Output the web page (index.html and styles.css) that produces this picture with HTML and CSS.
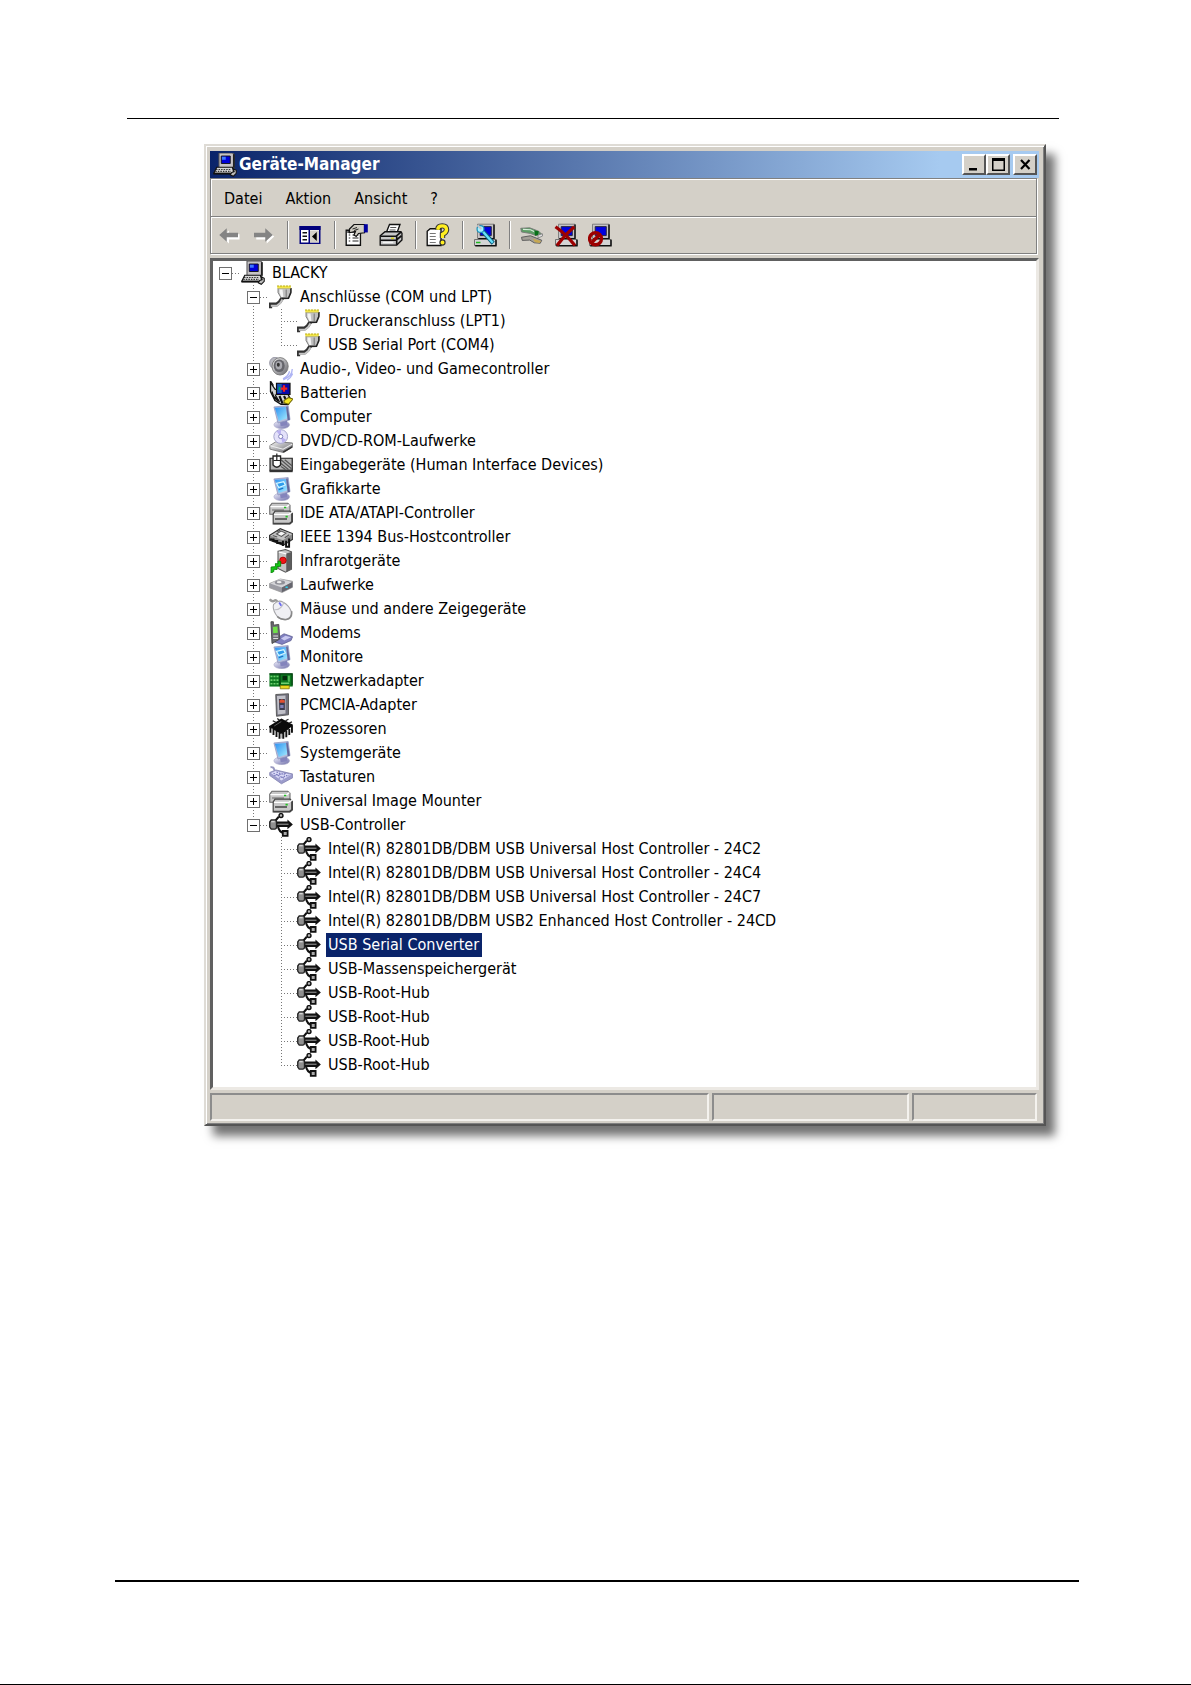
FILE: index.html
```html
<!DOCTYPE html>
<html lang="de">
<head>
    <meta charset="UTF-8">
    <meta name="viewport" content="width=device-width, initial-scale=1.0">
    <title>Geräte-Manager</title>
    <link rel="stylesheet" href="styles.css">
</head>
<body>
    <!-- Icons, 16x16 grid -->
    <svg class="sprite" aria-hidden="true">
        <defs>
            <linearGradient id="metal" x1="0" y1="0" x2="1" y2="1">
                <stop offset="0" stop-color="#f4f4f4"/>
                <stop offset="1" stop-color="#66666c"/>
            </linearGradient>
            <linearGradient id="screen" x1="0" y1="0" x2="1" y2="1">
                <stop offset="0" stop-color="#2c90f0"/>
                <stop offset="1" stop-color="#a4ecff"/>
            </linearGradient>
            <linearGradient id="lilac" x1="0" y1="0" x2="1" y2="1">
                <stop offset="0" stop-color="#f0f0fc"/>
                <stop offset="1" stop-color="#6c6ca8"/>
            </linearGradient>
        </defs>
        <symbol id="pc" viewBox="0 0 16 16">
            <path d="M4 0h9l1 1v9H4z" fill="#c6c3c6" stroke="#555" stroke-width=".7"/>
            <path d="M13.3 .8h1.2v9h-1.2z" fill="#222"/>
            <path d="M5.5 2h6v5h-6z" fill="#0000d8" stroke="#111" stroke-width=".6"/>
            <path d="M6 2.5h2.5v2H6z" fill="#3c78ff"/>
            <path d="M2.5 9.500h10.500l1 4H.5z" fill="#d8d8d8" stroke="#111" stroke-width=".8"/>
            <path d="M2 11h10M1.500 12.300h10.500" stroke="#333" stroke-width=".8" stroke-dasharray="1 .7"/>
            <path d="M.3 13.800h11.500" stroke="#111" stroke-width="1.200"/>
            <path d="M13.5 10.5l2 1v2l-2 2-2-1 1-1.5 1.6-.6z" fill="#bbb" stroke="#111" stroke-width=".7"/>
        </symbol>
        <symbol id="plug" viewBox="0 0 16 16">
            <path d="M.8 15.5v-2.500h4.200l2-1.500L9 8.500" fill="none" stroke="#333" stroke-width="2.6"/>
            <path d="M1.200 13.800h4L7.500 12 9 9.500" fill="none" stroke="#c4c4c4" stroke-width="1.3"/>
            <path d="M6 2h8.500v2.500L13 8.500H8L6 5z" fill="#c0c0c0" stroke="#777" stroke-width=".6"/>
            <path d="M7 3h2l.6 5H8.200L7 5z" fill="#f4f4f4"/>
            <path d="M14.600 2v3L13 8.800 8.500 9" fill="none" stroke="#222" stroke-width="1"/>
            <path d="M11.500 3v5" stroke="#888" stroke-width=".9"/>
            <path d="M5.500.5h9v1.8h-9z" fill="#f2e54a"/>
            <path d="M5.500.6h9.500" stroke="#a89a00" stroke-width=".7" stroke-dasharray="1 1"/>
        </symbol>
        <symbol id="audio" viewBox="0 0 16 16">
            <ellipse cx="4" cy="4" rx="3.6" ry="3.8" fill="#b8b8c0" stroke="#8a8a98" stroke-width=".5"/>
            <ellipse cx="7.4" cy="6.2" rx="5.4" ry="5.8" fill="url(#metal)" stroke="#777" stroke-width=".6"/>
            <ellipse cx="6.800" cy="5.8" rx="3.7" ry="4.2" fill="#66666c"/>
            <ellipse cx="6.6" cy="5.6" rx="2.200" ry="2.7" fill="#aaaab0"/>
            <ellipse cx="6.2" cy="5.2" rx="1" ry="1.3" fill="#333"/>
            <path d="M15.5 8q0 5-6 7.2M13.7 9.500q-.8 3.500-4.400 5M15.8 11q-1 2.8-3.8 4.500" fill="none" stroke="#aeb4f4" stroke-width=".9"/>
        </symbol>
        <symbol id="battery" viewBox="0 0 16 16">
            <path d="M1 1v6l3 6 4 2.500h5l1-4-2-4-8-2z" fill="#d5d5d5" stroke="#111" stroke-width=".9"/>
            <path d="M1 0l2 3M2 7l2 6M4 9l3 5" fill="none" stroke="#111" stroke-width=".8"/>
            <path d="M5 1.5h9v7.5H5z" fill="#0808a8" stroke="#111" stroke-width=".8"/>
            <path d="M5.5 2h3v6h-3z" fill="#155db0"/>
            <path d="M10 2.8v4.4M7.8 5h4.4" stroke="#f02020" stroke-width="1.5"/>
            <path d="M6.5 4h1v2h-1z" fill="#00b060"/>
            <path d="M3.5 10.500l3 3M7 10l2 5M10 10l1 2" stroke="#111" stroke-width="1.4"/>
            <path d="M10 13l3-2 3 1-3 3.5-3-1z" fill="#f4e620" stroke="#6e6400" stroke-width=".7"/>
        </symbol>
        <symbol id="computer" viewBox="0 0 16 16">
            <ellipse cx="8.5" cy="13.200" rx="5.200" ry="2.6" fill="url(#lilac)" stroke="#a4a4c4" stroke-width=".4"/>
            <path d="M7 9.500h5l.3 4-4.500.7z" fill="#8484bc"/>
            <path d="M3.3 1.3L12.800.4l1.200 9.400-8 2.200z" fill="#b6bcdc" stroke="#8c94bc" stroke-width=".5"/>
            <path d="M3.900 1.9l7.5-.6.8 7.500-5.700 1.900z" fill="url(#screen)"/>
            <path d="M12.400.8l1.500 9-1.500.4-1-9z" fill="#62689c"/>
        </symbol>
        <symbol id="display" viewBox="0 0 16 16">
            <use href="#computer"/>
            <path d="M5 4.300l4.800-1.200 1.100 2.200-4.400 1.700z" fill="#2e9cec" stroke="#d8f8ff" stroke-width=".8"/>
            <path d="M6.500 8.400l3-1" stroke="#1874c8" stroke-width=".8"/>
        </symbol>
        <symbol id="disc" viewBox="0 0 16 16">
            <path d="M.6 11l4-2.500 11 .8v2.700l-6 3.700-9-2.300z" fill="url(#metal)" stroke="#777" stroke-width=".6"/>
            <path d="M.8 11.2l8.600 2.300 6-3.400" fill="none" stroke="#eee" stroke-width=".7"/>
            <path d="M9.500 15.400l6-3.500" stroke="#333" stroke-width="1.100"/>
            <circle cx="7.800" cy="5" r="4.6" fill="#e4e2fa" stroke="#a0a0c8" stroke-width=".6"/>
            <path d="M7.800 5L5 1.500l3-1zM7.800 5l3.800 2.400-2.600 1.800z" fill="#b9b0f0"/>
            <circle cx="7.800" cy="5" r="1.400" fill="#fff" stroke="#7878b4" stroke-width=".6"/>
        </symbol>
        <symbol id="hid" viewBox="0 0 16 16">
            <path d="M.7 3.500h14.800v8H.7z" fill="#b4b4b4" stroke="#222" stroke-width=".8"/>
            <path d="M8 4.500l7 6M8 7l5 4M10.500 4.500l4.800 4M8 9l3 2" stroke="#555" stroke-width=".8"/>
            <path d="M.3 12h15.500" stroke="#333" stroke-width="1.600"/>
            <path d="M2.700 2h5v6q-2.500 3-5 0z" fill="#fff" stroke="#222" stroke-width=".9"/>
            <path d="M5.200.3v4.600M3 5h4.600" stroke="#222" stroke-width=".8"/>
        </symbol>
        <symbol id="drives" viewBox="0 0 16 16">
            <path d="M2 1.500h10.500l1.500 1.300v4.700l-2 1.300H.5V3.400z" fill="#c8c8c8" stroke="#666" stroke-width=".7"/>
            <path d="M1 3.700h11l1.600-1.400" fill="none" stroke="#fff" stroke-width=".8"/>
            <path d="M2 6h8" stroke="#777" stroke-width=".8"/>
            <path d="M4 6.800h10l1.600 1.500v5.500L14 15.200H2.800V8.600z" fill="#c8c8c8" stroke="#444" stroke-width=".8"/>
            <path d="M3.300 8.900h10l2-1.400" fill="none" stroke="#fff" stroke-width=".8"/>
            <path d="M4 12h8M15.300 8.500v5.300L13.800 15H3" fill="none" stroke="#444" stroke-width="1.100"/>
            <path d="M10 3.800h1.500v1H10zM11 9.800h1.500v1.200H11z" fill="#20c020"/>
        </symbol>
        <symbol id="ieee" viewBox="0 0 16 16">
            <path d="M.3 7l7.200-4.500 8.300 3.300v3.700l-6.300 4L.3 10z" fill="#888" stroke="#333" stroke-width=".8"/>
            <path d="M.8 7.200l8.500 3 6.200-4.200-8-3z" fill="#c4c4c4"/>
            <path d="M5 6l3-2 3.300 1.400-3 2.200z" fill="#f8f8f8" stroke="#555" stroke-width=".7"/>
            <path d="M2.500 7l3 1M10.500 8.500l3-2M5.500 4.500l2-1" stroke="#555" stroke-width=".8"/>
            <path d="M.8 9.200l8 3.300M9.300 10.500v3.500M3 9v2.400M5.500 10v2.600M11.400 10.500v4h2V9" fill="none" stroke="#111" stroke-width="1.300"/>
        </symbol>
        <symbol id="infrared" viewBox="0 0 16 16">
            <path d="M6 1.500L11 .4l4 1.500v11.500l-4 2L6 13z" fill="#c4c4c4" stroke="#555" stroke-width=".7"/>
            <path d="M11.500 3L15 2v11.400l-3.500 2z" fill="#5c5c5c"/>
            <path d="M6.500 2l5 1.200" stroke="#fff" stroke-width=".8"/>
            <circle cx="9.300" cy="7.600" r="2.200" fill="#f01414" stroke="#980000" stroke-width=".5"/>
            <path d="M7.800 8.300L6 8v2L4.300 9.700v2.100L1.400 12v4l1.800-1v-1.500l2.200.1v-2l2.400-.1z" fill="#14cc14" stroke="#078207" stroke-width=".6"/>
        </symbol>
        <symbol id="drive" viewBox="0 0 16 16">
            <path d="M.3 7L7.500 4l8.200 1.500v4l-7 3.500-8.400-3.200z" fill="#9c9ca4" stroke="#999" stroke-width=".5"/>
            <path d="M.8 7l7.800 2.600 6.800-3.600L7.500 4z" fill="#d4d4d8"/>
            <ellipse cx="7.300" cy="6.400" rx="3.400" ry="1.500" fill="#909098"/>
            <ellipse cx="6.800" cy="6.100" rx="1.600" ry=".7" fill="#eee"/>
            <path d="M8.600 9.600v3.200l7-3.300V6z" fill="#66666e"/>
            <path d="M11 9.500h1.500" stroke="#30d0f0" stroke-width="1"/>
        </symbol>
        <symbol id="mouse" viewBox="0 0 16 16">
            <path d="M.5 1.500Q2 3.500 3.500 2.500T6 4" fill="none" stroke="#999" stroke-width="1.600"/>
            <path d="M3 5q3-3.500 6.500-1.500 3.800 2 5.500 6.500.4 4-3.500 5-4.800.4-7-3.500Q2.300 8 3 5z" fill="#f0f0f4" stroke="#a4a4a8" stroke-width=".7"/>
            <path d="M3.500 8.500q4.500.5 6.500-5" fill="none" stroke="#c0c0c8" stroke-width=".7"/>
            <path d="M6.800 3.600l1.400 2.200" stroke="#6c6cf0" stroke-width="1.200"/>
            <path d="M15 9.500q.7 4.500-3.500 5.500-3.500.3-6-2" fill="none" stroke="#888" stroke-width="1.100"/>
        </symbol>
        <symbol id="modem" viewBox="0 0 16 16">
            <path d="M6 11l4-2.500 5.700 2-1 2.500-6 2.600-5-1.600z" fill="#8080c0" stroke="#5c5c90" stroke-width=".5"/>
            <path d="M8 11.600l3-1.800 3.700 1-4.500 2.200z" fill="#c8c8f0"/>
            <path d="M1.300.5h1.600v2.300l3.600-.5.700 9.700L2 15z" fill="#6a6a72" stroke="#444" stroke-width=".6"/>
            <path d="M2.600 4l3-.4.300 4.200-3.100.4z" fill="#70e048"/>
            <path d="M2.800 10h3.200M2.800 11.600h3.200" stroke="#ddd" stroke-width=".7"/>
        </symbol>
        <symbol id="network" viewBox="0 0 16 16">
            <path d="M.3 3h15.500v8.700H.3z" fill="#0d7a20"/>
            <path d="M1 5h5.500M1 7.400h5.500M1 9.800h5.500" stroke="#70d070" stroke-width="1.100" stroke-dasharray="1.300 .7"/>
            <path d="M9 4.500h3v3H9z" fill="#052c0c"/>
            <path d="M8 9.500h5.500M13.300 4.500v4" stroke="#70d070" stroke-width=".9"/>
            <path d="M.3 3.300h15.500M7.300 3v8.500M15.400 3v8" stroke="#053c10" stroke-width=".8"/>
            <path d="M7.500 11h6v2.200h-6z" fill="#e8d820" stroke="#7c7000" stroke-width=".5"/>
        </symbol>
        <symbol id="pcmcia" viewBox="0 0 16 16">
            <path d="M4.500 1l8.500-.5v14l-8 1z" fill="#70707c" stroke="#555" stroke-width=".6"/>
            <path d="M5.300 2l5.700-.3v12l-5.200.7z" fill="#c0c0c8"/>
            <path d="M6.600 4h4v7.300H6.900z" fill="#3c3c50"/>
            <path d="M7 5l1.500-.8 2 .8v1.500H7z" fill="#e05030"/>
            <path d="M7.500 8h2.200v2H7.500z" fill="#8080b8"/>
        </symbol>
        <symbol id="cpu" viewBox="0 0 16 16">
            <path d="M.5 6.500l7.800-5 7.200 4-7 5.500z" fill="#0a0a0a" stroke="#0a0a0a"/>
            <path d="M1 6v4.500M3 8v4M5 9v4.300M7 10v4.500M9.500 10v4.500M11.500 9v4.500M13.500 8v4M15.300 6v4.500" stroke="#111" stroke-width="1.300"/>
            <path d="M2 7.500v3.500M4 9v3M6 10v3M8.300 11v3.300M10.500 10v3.500M12.500 9v3.500" stroke="#aaa" stroke-width=".6"/>
            <path d="M4.500 3.500L2.500 2.500M7 2.200L5.500 1M11 2.500l2-1M13.500 4l1.800-.8" stroke="#222" stroke-width=".9"/>
            <path d="M3.500 6l4.700-3" stroke="#777" stroke-width=".5"/>
        </symbol>
        <symbol id="keyboard" viewBox="0 0 16 16">
            <path d="M1 1.500q2.300-.5 2.500 2" fill="none" stroke="#9898c0" stroke-width="1.300"/>
            <path d="M.5 5l4-1.700L15.800 6v2.500l-7.500 4L.5 7z" fill="#9c9ccc" stroke="#8888b4" stroke-width=".6"/>
            <path d="M1.300 5.300l3.200-1.300L14.800 6.500 8.200 10.300z" fill="#dadaf6"/>
            <path d="M3 5.500l7 3.300M5 4.700l7 2.500M3.500 7l8-1.500M6.500 8.800l7-2" stroke="#7474b8" stroke-width=".7" stroke-dasharray="1 .7"/>
        </symbol>
        <symbol id="usb" viewBox="0 0 16 16">
            <path d="M3.500 6L6.500 2.500M6 9q.5 3.500 4 4.500" stroke="#111" stroke-width="1.300" fill="none"/>
            <circle cx="8" cy="1.700" r="1.300" fill="#bbb" stroke="#111" stroke-width="1"/>
            <path d="M4 5.600h8.300V4.300l3.600 3.300-3.600 3.200V9.300H4z" fill="#111"/>
            <path d="M5.500 7.500h7.500" stroke="#888" stroke-width=".8"/>
            <path d="M.5 6l1-1.400H4q1 0 1 1.400v3.400q0 1.300-1 1.300H1.500l-1-1.300z" fill="#909090" stroke="#222" stroke-width=".9"/>
            <path d="M1.500 5.800h2.300" stroke="#ddd" stroke-width=".8"/>
            <path d="M9.200 12h3.200v3.200H9.200z" fill="#aaa" stroke="#111" stroke-width="1.200"/>
        </symbol>

        <!-- Toolbar -->
        <symbol id="back" viewBox="0 0 16 16">
            <path d="M3 9l5-4v2.500h7V11H8v2.600z" fill="#fff"/>
            <path d="M1.500 8l5-4.500v3h7.500v3H6.500v3z" fill="#848484"/>
        </symbol>
        <symbol id="forward" viewBox="0 0 16 16">
            <path d="M15.500 9l-5-4v2.500h-7V11h7v2.600z" fill="#fff"/>
            <path d="M14.500 8l-5-4.500v3H2v3h7.500v3z" fill="#848484"/>
        </symbol>
        <symbol id="pane" viewBox="0 0 16 16">
            <path d="M1.500 2.500h13v11h-13z" fill="#fff" stroke="#00007c"/>
            <path d="M1 2h14v2.600H1zM7 4h1v10H7z" fill="#00007c"/>
            <path d="M8 5h6v8H8z" fill="#d4d0c8"/>
            <path d="M3 6.500h3M3 8.800h3M3 11.100h3" stroke="#111" stroke-width="1"/>
            <path d="M12.500 6v6L9.300 9z" fill="#000"/>
        </symbol>
        <symbol id="properties" viewBox="0 0 16 16">
            <path d="M.8 4.800h9.500v10H.8z" fill="#fff" stroke="#111" stroke-width=".9"/>
            <path d="M1.500 6h8" stroke="#111" stroke-width="1"/>
            <path d="M2.500 8h1M5 8h4M2.500 10h1M5 10h4M2.500 12h1M5 12h4" stroke="#222" stroke-width=".8"/>
            <path d="M3 4l3-3h7v5.500L9 7 7.500 9 6 8l1-2.500-4 1z" fill="#d0cdc4" stroke="#111" stroke-width=".8"/>
            <path d="M5 4l3-1M6 5l3-1" stroke="#111" stroke-width=".6"/>
            <path d="M12.600.8h2.600v5.500h-2.600z" fill="#0000a0"/>
        </symbol>
        <symbol id="printer" viewBox="0 0 16 16">
            <path d="M5 6l2-5h7l-2 5.500z" fill="#fff" stroke="#111" stroke-width=".9"/>
            <path d="M7.500 3h4M7 4.600h4" stroke="#555" stroke-width=".7"/>
            <path d="M.8 8.500L4 5.800h10.500l.8 1v4.500l-3.500 3.400H.8z" fill="#c8c8c8" stroke="#111" stroke-width=".9"/>
            <path d="M1 8.800h10.500l3.500-3M1 11.500h10.500l3.500-3M11.800 9v5.500" fill="none" stroke="#111" stroke-width="1.100"/>
            <path d="M2.500 13h7" stroke="#f5f5f5" stroke-width="1"/>
            <path d="M8 10.200h2" stroke="#d8d020" stroke-width="1"/>
        </symbol>
        <symbol id="help" viewBox="0 0 16 16">
            <path d="M.8 5.500l2-1.700H10V15H.8z" fill="#fff" stroke="#111" stroke-width=".9"/>
            <path d="M2.500 7h4M2.500 9h4M2.500 11h4M2.500 13h4" stroke="#777" stroke-width=".8"/>
            <path d="M7.800 4.500Q8 1.900 10.800 1.900T13.700 4.500Q13.500 6.500 11 7.500v2.500" fill="none" stroke="#333" stroke-width="3.600"/>
            <path d="M7.800 4.500Q8 1.900 10.800 1.900T13.700 4.500Q13.500 6.500 11 7.500v2.500" fill="none" stroke="#ffee20" stroke-width="2.200"/>
            <circle cx="11" cy="13" r="1.700" fill="#ffee20" stroke="#333" stroke-width=".8"/>
        </symbol>
        <symbol id="box" viewBox="0 0 16 16">
            <path d="M3 .8h11v9.500H3z" fill="#c6c3c6" stroke="#777" stroke-width=".6"/>
            <path d="M14 1v9.500H3.500" fill="none" stroke="#111" stroke-width="1"/>
            <path d="M4.800 2.400h7.400v6H4.800z" fill="#0000e0" stroke="#223" stroke-width=".6"/>
            <path d="M1 11h14l.5 1v3H1z" fill="#d4d4d4" stroke="#666" stroke-width=".6"/>
            <path d="M15.300 11v4.200H1.500" fill="none" stroke="#111" stroke-width="1"/>
        </symbol>
        <symbol id="scan" viewBox="0 0 16 16">
            <use href="#box"/>
            <path d="M2 13h3" stroke="#20b820" stroke-width="1"/>
            <path d="M7 6l6.500 7.500" stroke="#075c7c" stroke-width="2.800"/>
            <path d="M6 5l7.200 8.200" stroke="#68e0fa" stroke-width="1.600"/>
            <circle cx="5" cy="4" r="2.300" fill="#a8f0ff" stroke="#2090b8" stroke-width=".8"/>
            <path d="M3 1.500L5.500 4" stroke="#c6c3c6" stroke-width="1.300"/>
        </symbol>
        <symbol id="update" viewBox="0 0 16 16">
            <path d="M.5 3.500l6-.3 6 2.300 2 2-4 .8L7 7 1 6z" fill="#5c9c64" stroke="#777" stroke-width=".6"/>
            <path d="M2 4.300l5 .2 4 2" fill="none" stroke="#d4ecd8" stroke-width=".8"/>
            <path d="M9.500 5l3 .5-.5 2.500-2 .5z" fill="#08701a"/>
            <path d="M12 8l3-.8v1.500l-3 1.300z" fill="#ddd" stroke="#777" stroke-width=".5"/>
            <path d="M1 9.500l6-1 7.500 3-1 2-4-.3-3-1.800-5 .2z" fill="#a4a098" stroke="#555" stroke-width=".6"/>
            <path d="M8.500 10.500l5.500 1.500-1 1.300-3-.4z" fill="#c8a850"/>
        </symbol>
        <symbol id="remove" viewBox="0 0 16 16">
            <use href="#box"/>
            <path d="M1 2.500Q8 7.500 14 15M13.500 2.500Q7 8 2 15" fill="none" stroke="#9c0000" stroke-width="2.200"/>
        </symbol>
        <symbol id="disable" viewBox="0 0 16 16">
            <use href="#box"/>
            <circle cx="5" cy="10.500" r="4" fill="none" stroke="#9c0000" stroke-width="2.200"/>
            <path d="M2.500 13l5-5" stroke="#9c0000" stroke-width="2.200"/>
        </symbol>
    </svg>

    <div class="page">
        <hr class="rule-top">

        <main class="window">
            <div class="titlebar">
                <svg class="icon"><use href="#pc"/></svg>
                <h1>Geräte-Manager</h1>
                <button class="caption" aria-label="Minimieren"><svg viewBox="0 0 16 14"><path d="M3 10h8v2.500H3z"/></svg></button>
                <button class="caption" aria-label="Maximieren"><svg viewBox="0 0 16 14"><path d="M2 0h13v13H2zM3.500 3v8.500h10V3z" fill-rule="evenodd"/></svg></button>
                <button class="caption close" aria-label="Schließen"><svg viewBox="0 0 16 14"><path d="M4 2l8.500 9M12.500 2L4 11" stroke="#000" stroke-width="2.200"/></svg></button>
            </div>

            <div class="bars">
                <nav class="menubar">
                    <button>Datei</button>
                    <button>Aktion</button>
                    <button>Ansicht</button>
                    <button>?</button>
                </nav>
                <div class="toolbar">
                    <button aria-label="Zurück"><svg class="icon"><use href="#back"/></svg></button>
                    <button aria-label="Vorwärts"><svg class="icon"><use href="#forward"/></svg></button>
                    <span class="sep"></span>
                    <button aria-label="Konsolenstruktur"><svg class="icon"><use href="#pane"/></svg></button>
                    <span class="sep"></span>
                    <button aria-label="Eigenschaften"><svg class="icon"><use href="#properties"/></svg></button>
                    <button aria-label="Drucken"><svg class="icon"><use href="#printer"/></svg></button>
                    <span class="sep"></span>
                    <button aria-label="Hilfe"><svg class="icon"><use href="#help"/></svg></button>
                    <span class="sep"></span>
                    <button aria-label="Nach geänderter Hardware suchen"><svg class="icon"><use href="#scan"/></svg></button>
                    <span class="sep"></span>
                    <button aria-label="Treiber aktualisieren"><svg class="icon"><use href="#update"/></svg></button>
                    <button aria-label="Deinstallieren"><svg class="icon"><use href="#remove"/></svg></button>
                    <button aria-label="Deaktivieren"><svg class="icon"><use href="#disable"/></svg></button>
                </div>
            </div>

            <div class="tree">
                <ul class="root">
                    <li>
                        <div class="row"><button class="toggle open" aria-label="Reduzieren"></button><svg class="icon"><use href="#pc"/></svg><span class="label">BLACKY</span></div>
                        <ul>
                            <li>
                                <div class="row"><button class="toggle open" aria-label="Reduzieren"></button><svg class="icon"><use href="#plug"/></svg><span class="label">Anschlüsse (COM und LPT)</span></div>
                                <ul>
                                    <li><div class="row leaf"><svg class="icon"><use href="#plug"/></svg><span class="label">Druckeranschluss (LPT1)</span></div></li>
                                    <li><div class="row leaf"><svg class="icon"><use href="#plug"/></svg><span class="label">USB Serial Port (COM4)</span></div></li>
                                </ul>
                            </li>
                            <li><div class="row"><button class="toggle" aria-label="Erweitern"></button><svg class="icon"><use href="#audio"/></svg><span class="label">Audio-, Video- und Gamecontroller</span></div></li>
                            <li><div class="row"><button class="toggle" aria-label="Erweitern"></button><svg class="icon"><use href="#battery"/></svg><span class="label">Batterien</span></div></li>
                            <li><div class="row"><button class="toggle" aria-label="Erweitern"></button><svg class="icon"><use href="#computer"/></svg><span class="label">Computer</span></div></li>
                            <li><div class="row"><button class="toggle" aria-label="Erweitern"></button><svg class="icon"><use href="#disc"/></svg><span class="label">DVD/CD-ROM-Laufwerke</span></div></li>
                            <li><div class="row"><button class="toggle" aria-label="Erweitern"></button><svg class="icon"><use href="#hid"/></svg><span class="label">Eingabegeräte (Human Interface Devices)</span></div></li>
                            <li><div class="row"><button class="toggle" aria-label="Erweitern"></button><svg class="icon"><use href="#display"/></svg><span class="label">Grafikkarte</span></div></li>
                            <li><div class="row"><button class="toggle" aria-label="Erweitern"></button><svg class="icon"><use href="#drives"/></svg><span class="label">IDE ATA/ATAPI-Controller</span></div></li>
                            <li><div class="row"><button class="toggle" aria-label="Erweitern"></button><svg class="icon"><use href="#ieee"/></svg><span class="label">IEEE 1394 Bus-Hostcontroller</span></div></li>
                            <li><div class="row"><button class="toggle" aria-label="Erweitern"></button><svg class="icon"><use href="#infrared"/></svg><span class="label">Infrarotgeräte</span></div></li>
                            <li><div class="row"><button class="toggle" aria-label="Erweitern"></button><svg class="icon"><use href="#drive"/></svg><span class="label">Laufwerke</span></div></li>
                            <li><div class="row"><button class="toggle" aria-label="Erweitern"></button><svg class="icon"><use href="#mouse"/></svg><span class="label">Mäuse und andere Zeigegeräte</span></div></li>
                            <li><div class="row"><button class="toggle" aria-label="Erweitern"></button><svg class="icon"><use href="#modem"/></svg><span class="label">Modems</span></div></li>
                            <li><div class="row"><button class="toggle" aria-label="Erweitern"></button><svg class="icon"><use href="#display"/></svg><span class="label">Monitore</span></div></li>
                            <li><div class="row"><button class="toggle" aria-label="Erweitern"></button><svg class="icon"><use href="#network"/></svg><span class="label">Netzwerkadapter</span></div></li>
                            <li><div class="row"><button class="toggle" aria-label="Erweitern"></button><svg class="icon"><use href="#pcmcia"/></svg><span class="label">PCMCIA-Adapter</span></div></li>
                            <li><div class="row"><button class="toggle" aria-label="Erweitern"></button><svg class="icon"><use href="#cpu"/></svg><span class="label">Prozessoren</span></div></li>
                            <li><div class="row"><button class="toggle" aria-label="Erweitern"></button><svg class="icon"><use href="#computer"/></svg><span class="label">Systemgeräte</span></div></li>
                            <li><div class="row"><button class="toggle" aria-label="Erweitern"></button><svg class="icon"><use href="#keyboard"/></svg><span class="label">Tastaturen</span></div></li>
                            <li><div class="row"><button class="toggle" aria-label="Erweitern"></button><svg class="icon"><use href="#drives"/></svg><span class="label">Universal Image Mounter</span></div></li>
                            <li>
                                <div class="row"><button class="toggle open" aria-label="Reduzieren"></button><svg class="icon"><use href="#usb"/></svg><span class="label">USB-Controller</span></div>
                                <ul>
                                    <li><div class="row leaf"><svg class="icon"><use href="#usb"/></svg><span class="label">Intel(R) 82801DB/DBM USB Universal Host Controller - 24C2</span></div></li>
                                    <li><div class="row leaf"><svg class="icon"><use href="#usb"/></svg><span class="label">Intel(R) 82801DB/DBM USB Universal Host Controller - 24C4</span></div></li>
                                    <li><div class="row leaf"><svg class="icon"><use href="#usb"/></svg><span class="label">Intel(R) 82801DB/DBM USB Universal Host Controller - 24C7</span></div></li>
                                    <li><div class="row leaf"><svg class="icon"><use href="#usb"/></svg><span class="label">Intel(R) 82801DB/DBM USB2 Enhanced Host Controller - 24CD</span></div></li>
                                    <li><div class="row leaf"><svg class="icon"><use href="#usb"/></svg><span class="label selected">USB Serial Converter</span></div></li>
                                    <li><div class="row leaf"><svg class="icon"><use href="#usb"/></svg><span class="label">USB-Massenspeichergerät</span></div></li>
                                    <li><div class="row leaf"><svg class="icon"><use href="#usb"/></svg><span class="label">USB-Root-Hub</span></div></li>
                                    <li><div class="row leaf"><svg class="icon"><use href="#usb"/></svg><span class="label">USB-Root-Hub</span></div></li>
                                    <li><div class="row leaf"><svg class="icon"><use href="#usb"/></svg><span class="label">USB-Root-Hub</span></div></li>
                                    <li><div class="row leaf"><svg class="icon"><use href="#usb"/></svg><span class="label">USB-Root-Hub</span></div></li>
                                </ul>
                            </li>
                        </ul>
                    </li>
                </ul>
            </div>

            <div class="statusbar">
                <span></span>
                <span></span>
                <span></span>
            </div>
        </main>

        <hr class="rule-bottom">
    </div>
</body>
</html>
```

FILE: styles.css
```css
* {
    box-sizing: border-box;
}

body {
    margin: 0;
    background: #fff;
    color: #000;
    font: 16px/24px "DejaVu Sans Condensed", "DejaVu Sans", sans-serif;
}

button {
    font: inherit;
    color: inherit;
    background: none;
    border: 0;
    padding: 0;
}

.sprite {
    position: absolute;
    width: 0;
    height: 0;
}

.icon {
    width: 24px;
    height: 24px;
    flex: none;
}

.page {
    min-height: 100vh;
    display: flex;
    flex-direction: column;
    padding: 118px 112px 102px 115px;
    border-bottom: 1px solid #000;
}

hr {
    border: 0;
    background: #000;
}

.rule-top {
    height: 1px;
    margin: 0 20px 0 12px;
}

.rule-bottom {
    height: 2px;
    margin: auto 0 0;
}

/* Window frame */
.window {
    margin: 25px 33px 40px 89px;
    padding: 5px 5px 3px 4px;
    background: #d4d0c8;
    border: 2px solid;
    border-color: #dedbd5 #555 #555 #dedbd5;
    box-shadow: inset 1px 1px #fff, inset -1px -1px #808080, 9px 10px 9px rgba(0, 0, 0, .55);
}

.titlebar {
    display: flex;
    align-items: center;
    height: 27px;
    padding: 0 2px 0 3px;
    color: #fff;
    background: linear-gradient(to right, #0a246a, #a6caf0 88%);
}

.titlebar h1 {
    flex: 1;
    margin: 0 0 0 2px;
    font-size: 17px;
    line-height: 27px;
}

.caption {
    width: 24px;
    height: 21px;
    background: #d4d0c8;
    border: 2px solid;
    border-color: #fff #555 #555 #fff;
}

.caption svg {
    display: block;
    width: 16px;
    height: 14px;
    margin: auto;
}

.close {
    margin-left: 3px;
}

/* Menu and toolbar */
.bars {
    margin-right: 2px;
    border: 1px solid #808080;
    box-shadow: 1px 1px #fff, inset 1px 1px #fff;
}

.menubar {
    display: flex;
    height: 38px;
    padding: 3px 0 0 1px;
    border-bottom: 1px solid #808080;
}

.menubar button {
    padding: 0 11px 0 12px;
}

.toolbar {
    display: flex;
    align-items: center;
    height: 36px;
    padding-left: 1px;
    box-shadow: inset 0 1px #fff;
}

.toolbar button {
    width: 34px;
    height: 24px;
}

.sep {
    width: 2px;
    height: 28px;
    margin: 0 4px 0 7px;
    border-left: 1px solid #808080;
    border-right: 1px solid #fff;
}

/* Device tree */
.tree {
    margin-top: 4px;
    padding: 0 0 10px 6px;
    background: #fff;
    border: 3px solid;
    border-color: #606060 #ece9e4 #ece9e4 #606060;
}

.tree ul {
    list-style: none;
    margin: 0;
    padding: 0 0 0 28px;
}

.tree .root {
    padding-left: 0;
}

/* dotted guide line under the expander boxes */
.tree li li {
    background: repeating-linear-gradient(#777 0 1px, #fff 1px 3px) 6px 0 / 1px 100% no-repeat;
}

.tree li li:last-child {
    background-size: 1px 12px;
}

.row {
    display: flex;
    align-items: center;
    height: 24px;
}

.row::before {
    content: "";
    order: 1;
    width: 9px;
    height: 1px;
    background: repeating-linear-gradient(to right, #777 0 1px, #fff 1px 3px);
}

.leaf::before {
    width: 16px;
    margin-left: 6px;
}

.row .icon {
    order: 2;
    margin-right: 5px;
}

.label {
    order: 3;
    padding: 0 3px 0 2px;
    white-space: nowrap;
}

.selected {
    color: #fff;
    background: #0a246a;
}

.toggle {
    width: 13px;
    height: 13px;
    border: 1px solid #707070;
    background:
        linear-gradient(#000, #000) center / 7px 1px no-repeat,
        linear-gradient(#000, #000) center / 1px 7px no-repeat,
        #fff;
}

.toggle.open {
    background: linear-gradient(#000, #000) center / 7px 1px no-repeat, #fff;
}

.statusbar {
    display: flex;
    gap: 3px;
    height: 28px;
    margin: 3px 2px 0 0;
}

.statusbar span {
    border: 2px solid;
    border-color: #8c8c8c #f4f2ee #f4f2ee #8c8c8c;
}

.statusbar span:nth-child(1) {
    flex: 504;
}

.statusbar span:nth-child(2) {
    flex: 196;
}

.statusbar span:nth-child(3) {
    flex: 123;
}
```
